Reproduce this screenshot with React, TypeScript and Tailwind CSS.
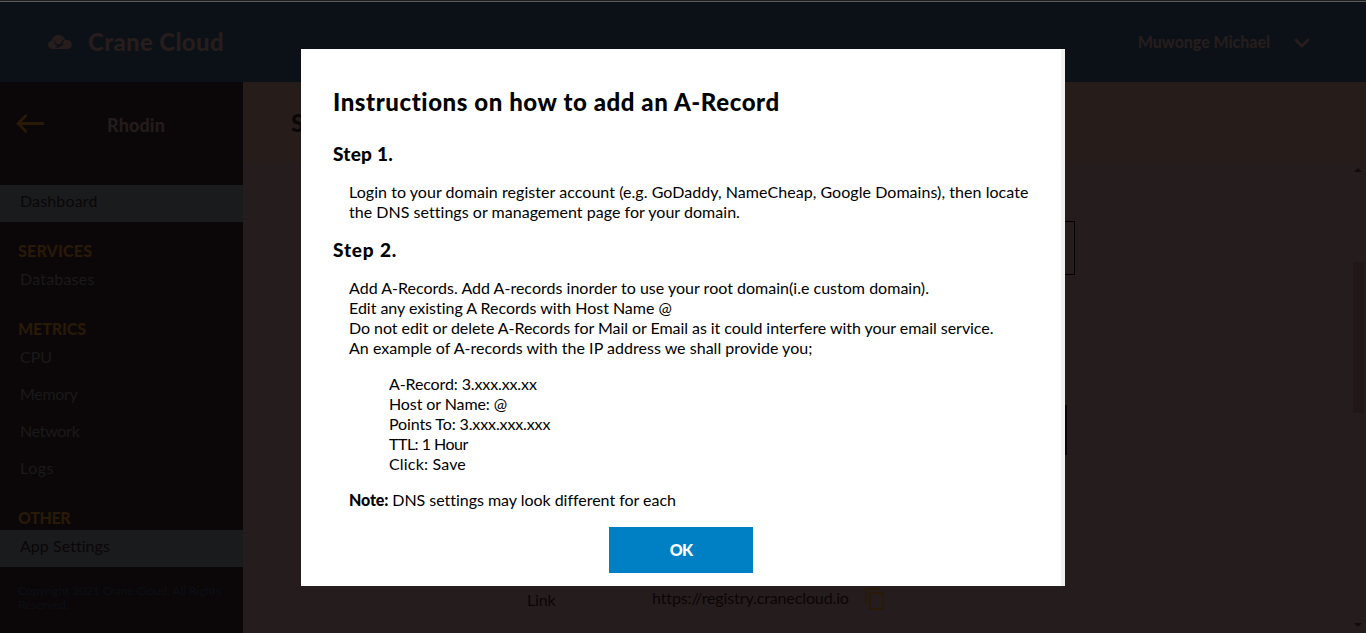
import React from 'react';

type Item = { label: string; active?: boolean; tracking: string };
type Section = { title?: string; tracking?: string; items: Item[] };

const sections: Section[] = [
  { items: [{ label: 'Dashboard', active: true, tracking: 'tracking-[0.15px]' }] },
  {
    title: 'SERVICES',
    tracking: 'tracking-[0.2px]',
    items: [{ label: 'Databases', tracking: 'tracking-[0.2px]' }],
  },
  {
    title: 'METRICS',
    tracking: 'tracking-[-0.12px]',
    items: [
      { label: 'CPU', tracking: 'tracking-[0px]' },
      { label: 'Memory', tracking: 'tracking-[-0.3px]' },
      { label: 'Network', tracking: 'tracking-[-0.3px]' },
      { label: 'Logs', tracking: 'tracking-[0.5px]' },
    ],
  },
  {
    title: 'OTHER',
    tracking: 'tracking-[-0.4px]',
    items: [{ label: 'App Settings', active: true, tracking: 'tracking-[0.05px]' }],
  },
];

function CloudLogo() {
  return (
    <svg width="24" height="14" viewBox="0 0 24 14" className="shrink-0">
      <path
        d="M4.600 14C2 14 0 12.200 0 9.700 0 7.500 1.600 5.800 3.700 5.500 4.300 2.300 7.100 0 10.400 0c3.300 0 6 2 7 5.200.5-.15.9-.2 1.400-.2C21.700 5 24 6.900 24 9.500 24 12.100 22 14 19.400 14Z"
        fill="#261d1c"
      />
      <path
        d="M6 4.500c.6 2.400 1.800 4 3.700 4.700 1.200.5 2.400.1 3.100-.8.900-1.200 1.300-2.600 3.100-3.900-.3 2.300-.9 4-2.200 5.300l3.300-.5c-2.600 1.300-4.600 1.900-6.700 3.300-1 .5-2.100.5-3.300.3 1.100-.5 1.900-1.100 2.400-2C7.100 10 5.600 7.300 6 4.500Z"
        fill="#0b1117"
      />
    </svg>
  );
}

function Header() {
  return (
    <header className="flex h-[80px] shrink-0 items-center bg-[#0b1117] pl-12 pr-[56px] font-black text-[#261d1c]">
      <CloudLogo />
      <span className="ml-4 text-2xl leading-[30px] tracking-[0.35px]">Crane Cloud</span>
      <span className="-mt-px ml-auto text-base leading-5 tracking-[-0.05px]">Muwonge Michael</span>
      <svg width="16" height="10" viewBox="0 0 16 10" className="ml-6 mt-px">
        <path d="M1.200 1.200 8 8l6.800-6.800" fill="none" stroke="#261d1c" strokeWidth="2.800" />
      </svg>
    </header>
  );
}

function Sidebar() {
  return (
    <aside className="flex w-[243px] shrink-0 flex-col bg-[#0b0708]">
      <div className="flex h-[103px] items-start pl-4 pt-8">
        <svg width="28" height="20" viewBox="0 0 28 20" className="shrink-0">
          <path d="M28 9.500H2M10.500 1 2 9.500l8.500 8.500" fill="none" stroke="#281a06" strokeWidth="2.800" />
        </svg>
        <span className="ml-[63px] text-lg font-black leading-[22px] tracking-[0.1px] text-[#231b1c]">Rhodin</span>
      </div>
      <nav>
        {sections.map((section, i) => (
          <div key={i}>
            {section.title && (
              <div className={`h-[41px] pl-[18px] pt-[19px] text-base font-black leading-5 text-[#281a06] ${section.tracking}`}>
                {section.title}
              </div>
            )}
            {section.items.map((item) => (
              <div
                key={item.label}
                className={`h-[37px] pl-5 pt-[6px] text-base leading-5 ${item.tracking} ${
                  item.active ? 'bg-[#1a1b1d] text-[#0b0708]' : 'text-[#1a191b]'
                }`}
              >
                {item.label}
              </div>
            ))}
          </div>
        ))}
      </nav>
      <p className="mt-[17px] pl-[18px] text-xs leading-[14px] tracking-[-0.08px] text-[#0c0f16]">
        Copyright 2021 Crane Cloud. All Rights
        <br />
        Reserved.
      </p>
    </aside>
  );
}

function CopyIcon() {
  return (
    <svg width="24" height="24" viewBox="0 0 24 24" fill="#281a06">
      <path d="M16 1H4c-1.100 0-2 .9-2 2v14h2V3h12V1zm3 4H8c-1.100 0-2 .9-2 2v14c0 1.100.9 2 2 2h11c1.100 0 2-.9 2-2V7c0-1.100-.9-2-2-2zm0 16H8V7h11v14z" />
    </svg>
  );
}

function Scrollbar() {
  return (
    <div className="flex w-4 shrink-0 flex-col items-center pt-[5px]">
      <svg width="8" height="4" viewBox="0 0 8 4">
        <path d="M0 4 4 0l4 4Z" fill="#120b0d" />
      </svg>
      <div className="mt-[90px] h-[151px] w-[11px] bg-[#211718]" />
      <svg width="8" height="4" viewBox="0 0 8 4" className="mb-[6px] mt-auto">
        <path d="M0 0h8L4 4Z" fill="#120b0d" />
      </svg>
    </div>
  );
}

function Settings() {
  return (
    <main className="flex min-w-0 flex-1 flex-col bg-[#251c1d]">
      <div className="h-[81px] shrink-0 bg-[#261d1b] pl-[48px] pt-[26px] text-2xl font-black leading-[29px] text-[#0b0607]">
        S
      </div>
      <div className="flex min-h-0 flex-1">
        <div className="min-w-0 flex-1 pt-[58px]">
          <div className="ml-[285px] h-[54px] w-[547px] border border-black" />
          <div className="ml-[285px] mt-[130px] h-[50px] w-[539px] border-2 border-[#070505]" />
          <div className="ml-[284px] mt-[132px] flex h-6 items-start text-base leading-5 text-[#0b0607]">
            <span className="w-[125px] pt-[3px] tracking-[-0.15px]">Link</span>
            <span className="w-[211px] pt-px tracking-[-0.12px]">https://registry.cranecloud.io</span>
            <CopyIcon />
          </div>
        </div>
        <Scrollbar />
      </div>
    </main>
  );
}

function InstructionsModal() {
  return (
    <div className="absolute inset-0 flex items-start justify-center pt-[49px]">
      <section
        role="dialog"
        className="h-[537px] w-[764px] border-r-4 border-[#f1f1f1] bg-white px-8 pt-[38px] text-base leading-5 text-black"
      >
        <h2 className="whitespace-nowrap text-2xl font-black leading-[29px] tracking-[0.58px]">
          Instructions on how to add an A-Record
        </h2>
        <h3 className="mt-[26px] text-[19px] font-black leading-6 tracking-[0.25px]">Step 1.</h3>
        <div className="mt-4 whitespace-nowrap pl-4">
          <p className="tracking-[0.05px]">
            Login to your domain register account (e.g. GoDaddy, NameCheap, Google Domains), then locate
          </p>
          <p className="tracking-[0.03px]">the DNS settings or management page for your domain.</p>
        </div>
        <h3 className="mt-4 text-[19px] font-black leading-6 tracking-[0.85px]">Step 2.</h3>
        <div className="mt-4 whitespace-nowrap pl-4">
          <p className="tracking-[0.015px]">
            Add A-Records. Add A-records inorder to use your root domain(i.e custom domain).
          </p>
          <p className="tracking-[-0.02px]">Edit any existing A Records with Host Name @</p>
          <p className="tracking-[-0.05px]">
            Do not edit or delete A-Records for Mail or Email as it could interfere with your email service.
          </p>
          <p className="tracking-[0.03px]">An example of A-records with the IP address we shall provide you;</p>
          <div className="mt-4 pl-10">
            <p className="tracking-[-0.12px]">A-Record: 3.xxx.xx.xx</p>
            <p className="tracking-[-0.1px]">Host or Name: @</p>
            <p className="tracking-[-0.12px]">Points To: 3.xxx.xxx.xxx</p>
            <p className="tracking-[-0.5px]">TTL: 1 Hour</p>
            <p className="tracking-[0.18px]">Click: Save</p>
          </div>
          <p className="mt-4 tracking-[-0.03px]">
            <b className="font-black tracking-[-0.15px]">Note:</b> DNS settings may look different for each
          </p>
        </div>
        <button className="mx-auto mt-[17px] block h-[46px] w-36 bg-[#0080c4] text-base font-black leading-5 tracking-[-0.8px] text-white">
          OK
        </button>
      </section>
    </div>
  );
}

export default function App() {
  return (
    <div className="relative flex h-[633px] w-[1366px] flex-col overflow-hidden bg-[#0b0708] font-['Lato',sans-serif]">
      <div className="h-[2px] shrink-0 border-b border-[#5c5a5a] bg-[#1f1f20]" />
      <Header />
      <div className="flex min-h-0 flex-1">
        <Sidebar />
        <Settings />
      </div>
      <InstructionsModal />
    </div>
  );
}
